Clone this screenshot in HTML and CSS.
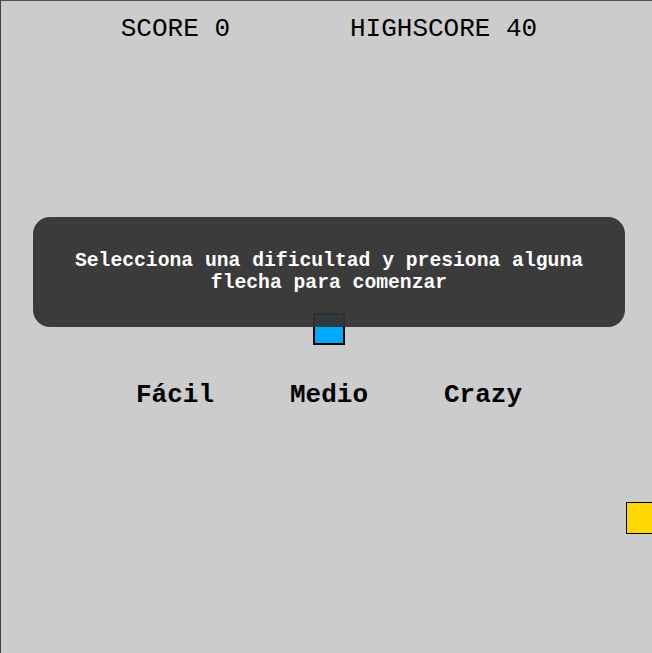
FILE: index.html
```html
<!DOCTYPE html>
<html lang="es">
<head>
<meta charset="utf-8">
<title>Snake</title>
<link rel="stylesheet" href="styles.css">
</head>
<body>
<div class="game">
  <div class="scores">
    <span class="score">SCORE 0</span>
    <span class="score">HIGHSCORE 40</span>
  </div>
  <div class="levels">
    <span class="level">Fácil</span>
    <span class="level">Medio</span>
    <span class="level">Crazy</span>
  </div>
  <div class="cell snake"></div>
  <div class="cell food"></div>
  <div class="overlay">
    <p class="message">Selecciona una dificultad y presiona alguna flecha para comenzar</p>
  </div>
</div>
</body>
</html>
```
FILE: styles.css
```css
html, body {
  margin: 0;
  padding: 0;
  overflow: hidden;
  background: #cccccc;
}
.game {
  position: relative;
  width: 656px;
  height: 660px;
  background: #cccccc;
  border-top: 1px solid #555555;
  border-left: 1px solid #444444;
  font-family: "Liberation Mono", "Courier New", monospace;
  color: #000000;
}
.scores {
  display: flex;
  justify-content: center;
  gap: 120px;
  padding-top: 13px;
  font-size: 26px;
  line-height: 30px;
}
.levels {
  display: flex;
  justify-content: center;
  gap: 76px;
  margin-top: 336px;
  font-size: 26px;
  line-height: 30px;
  font-weight: bold;
}
.level {
  cursor: pointer;
}
.cell {
  position: absolute;
  box-sizing: border-box;
  width: 32px;
  height: 32px;
}
.snake {
  left: 312px;
  top: 312px;
  background: #00aaff;
  border: 2px solid #000000;
}
.food {
  left: 625px;
  top: 501px;
  background: #ffd700;
  border: 1px solid #000000;
}
.overlay {
  position: absolute;
  left: 32px;
  top: 216px;
  width: 592px;
  height: 110px;
  border-radius: 17px;
  background: rgba(50, 50, 50, 0.94);
  display: flex;
  align-items: center;
  justify-content: center;
  padding: 0 20px;
  box-sizing: border-box;
}
.message {
  margin: 0;
  color: #ffffff;
  font-size: 19.7px;
  line-height: 22px;
  font-weight: bold;
  text-align: center;
}
```
